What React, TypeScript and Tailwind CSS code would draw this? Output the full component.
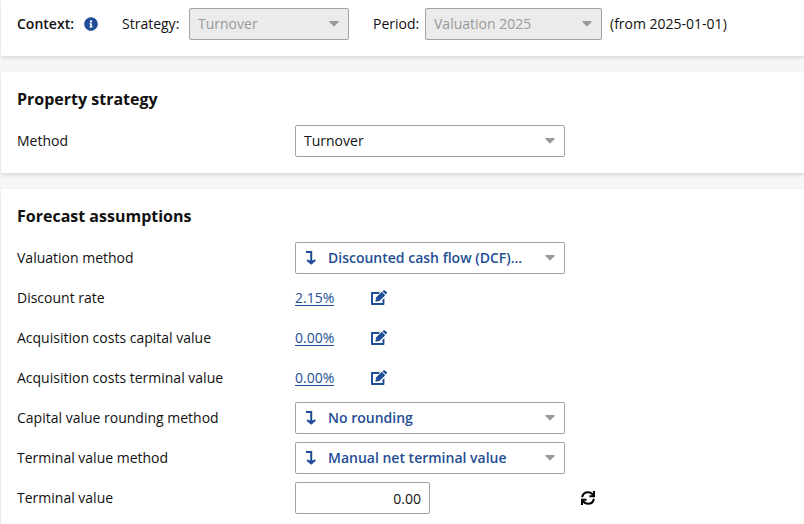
import type { ReactNode } from "react";
import { FaInfoCircle } from "react-icons/fa";

function Caret() {
  return (
    <svg viewBox="0 0 10 6" className="pointer-events-none absolute top-1/2 right-2.5 h-1.5 w-2.5 -translate-y-1/2 fill-[#999999]" aria-hidden="true">
      <path d="M.8 0h8.4q.8.3.4 1L5.7 5.1q-.7.6-1.4 0L.4 1Q0 .3.8 0Z" />
    </svg>
  );
}

function TurnDownIcon() {
  return (
    <svg viewBox="0 0 10 14" className="pointer-events-none absolute top-1/2 left-[11px] h-3.5 w-2.5 -translate-y-1/2 fill-none stroke-[#1f4e96] stroke-2" aria-hidden="true">
      <path d="M0 1h5.2v11.2M1.1 9l4.1 3.5L9.3 9" />
      <path d="M3.4 10.2h3.6" />
    </svg>
  );
}

function EditIcon() {
  return (
    <svg viewBox="0 0 16 16" className="size-4 fill-[#1f4e96]" aria-hidden="true">
      <path d="M.8 2h8.4L7.4 4H2v9h9.4V9.9l2-1.9v6.2q0 .8-.8.8H.8q-.8 0-.8-.8V2.8Q0 2 .8 2Z" />
      <path d="M4.4 11.7l.6-4.1 5.8-5.8 3.4 3.4-5.7 5.8Z" />
      <path d="M11.5 1.2l.8-.8q.8-.7 1.6 0l1.7 1.7q.7.8 0 1.6l-.8.8Z" />
    </svg>
  );
}

function RefreshIcon() {
  return (
    <svg viewBox="0 0 14 14" className="size-3.5" aria-hidden="true">
      <path className="fill-none stroke-black stroke-2" d="M1.1 6.3C1.7 3 4.1 1.2 7 1.2c2.3 0 3.8 1 5.2 2.9M12.9 7.7c-.6 3.3-3 5.1-5.9 5.1-2.3 0-3.8-1-5.2-2.9" />
      <path className="fill-none stroke-black stroke-2" d="M13 0v5.2H8.4M1 14V8.8h4.6" />
    </svg>
  );
}

type SelectProps = {
  id: string;
  value: string;
  disabled?: boolean;
  inherited?: boolean;
  width: string;
};

function SelectBox({ id, value, disabled, inherited, width }: SelectProps) {
  return (
    <div className={`relative ${width}`}>
      <select
        id={id}
        disabled={disabled}
        className={`block h-8 w-full appearance-none truncate rounded-xs border border-[#a3a3a3] pr-8 opacity-100 ${
          disabled ? "bg-[#ebebeb] text-[#999999]" : "bg-white"
        } ${inherited ? "pl-8 font-semibold text-[#1f4e96]" : "pl-2"}`}
      >
        <option>{value}</option>
      </select>
      {inherited && <TurnDownIcon />}
      <Caret />
    </div>
  );
}

function Row({ id, label, children }: { id: string; label: string; children: ReactNode }) {
  return (
    <div className="flex h-8 items-center">
      <label htmlFor={id} className="w-[278px] shrink-0">{label}</label>
      {children}
    </div>
  );
}

function Rate({ id, name, value }: { id: string; name: string; value: string }) {
  return (
    <>
      <a id={id} href="#" className="w-[76px] text-[#1f4e96] underline underline-offset-2">{value}</a>
      <button type="button" aria-label={`Edit ${name}`} className="cursor-pointer">
        <EditIcon />
      </button>
    </>
  );
}

function Panel({ title, children }: { title: string; children: ReactNode }) {
  return (
    <section className="bg-white px-4 pt-[15px] pb-4 shadow-[0_2px_4px_rgba(0,0,0,0.12)]">
      <h2 className="mb-3.5 text-base leading-6 font-bold">{title}</h2>
      <div className="flex flex-col gap-2">{children}</div>
    </section>
  );
}

export default function App() {
  return (
    <main className="flex h-screen flex-col gap-4 overflow-hidden bg-[#f6f6f6] pl-px font-['Open_Sans',sans-serif] text-sm text-[#111111] *:shrink-0">
      <header className="flex items-center bg-white px-4 pt-2 pb-4 shadow-[0_2px_4px_rgba(0,0,0,0.12)]">
        <strong className="w-[67px] font-semibold">Context:</strong>
        <button type="button" aria-label="Context information" className="mr-6 text-[#1f4e96]">
          <FaInfoCircle className="size-3.5" />
        </button>
        <label htmlFor="strategy" className="w-[67px]">Strategy:</label>
        <SelectBox id="strategy" value="Turnover" disabled width="w-40" />
        <label htmlFor="period" className="ml-6 w-[52px]">Period:</label>
        <SelectBox id="period" value="Valuation 2025" disabled width="w-[177px]" />
        <span className="ml-2">(from 2025-01-01)</span>
      </header>

      <Panel title="Property strategy">
        <Row id="method" label="Method">
          <SelectBox id="method" value="Turnover" width="w-[270px]" />
        </Row>
      </Panel>

      <Panel title="Forecast assumptions">
        <Row id="valuation" label="Valuation method">
          <SelectBox id="valuation" value="Discounted cash flow (DCF)..." inherited width="w-[270px]" />
        </Row>
        <Row id="discount" label="Discount rate">
          <Rate id="discount" name="discount rate" value="2.15%" />
        </Row>
        <Row id="capital-costs" label="Acquisition costs capital value">
          <Rate id="capital-costs" name="acquisition costs capital value" value="0.00%" />
        </Row>
        <Row id="terminal-costs" label="Acquisition costs terminal value">
          <Rate id="terminal-costs" name="acquisition costs terminal value" value="0.00%" />
        </Row>
        <Row id="rounding" label="Capital value rounding method">
          <SelectBox id="rounding" value="No rounding" inherited width="w-[270px]" />
        </Row>
        <Row id="terminal-method" label="Terminal value method">
          <SelectBox id="terminal-method" value="Manual net terminal value" inherited width="w-[270px]" />
        </Row>
        <Row id="terminal-value" label="Terminal value">
          <div className="w-[286px]">
            <input
              id="terminal-value"
              type="text"
              defaultValue="0.00"
              className="block h-8 w-[135px] rounded-xs border border-[#a3a3a3] bg-white px-2 text-right"
            />
          </div>
          <button type="button" aria-label="Recalculate terminal value" className="cursor-pointer">
            <RefreshIcon />
          </button>
        </Row>
      </Panel>
    </main>
  );
}
